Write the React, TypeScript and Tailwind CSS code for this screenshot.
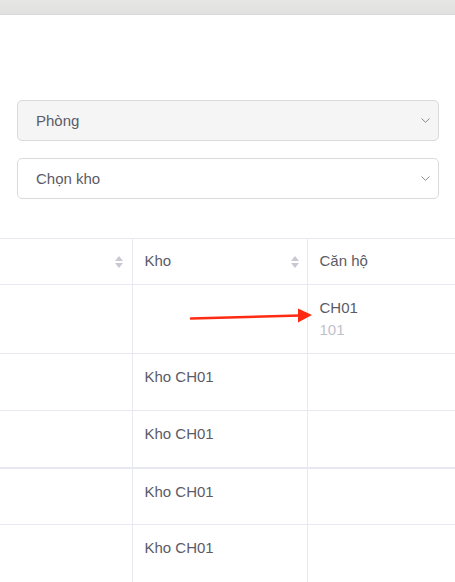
import React from 'react';

const Chevron: React.FC = () => (
  <svg className="w-[9px] h-[5px]" viewBox="0 0 9 5" fill="none" stroke="#8a8a90" strokeWidth={1}>
    <path d="M0.8 0.8l3.7 3.5 3.7-3.5" strokeLinecap="round" strokeLinejoin="round" />
  </svg>
);

const SortIcon: React.FC = () => (
  <svg className="w-[10px] h-[14px]" viewBox="0 0 10 14" fill="#c8c9d2">
    <path d="M5 1l4 5H1z" />
    <path d="M5 13l4-5H1z" />
  </svg>
);

const Select: React.FC<{ label: string; filled?: boolean }> = ({ label, filled }) => (
  <div className={`h-[41px] rounded-[5px] border border-[#d9d9de] flex items-center justify-between pl-[18px] pr-[8px] ${filled ? 'bg-[#f5f5f6]' : 'bg-white'}`}>
    <span className="text-[15px] text-[#5b5b66] pt-[2px]">{label}</span>
    <Chevron />
  </div>
);

const rows = ['Kho CH01', 'Kho CH01', 'Kho CH01', 'Kho CH01'];

const App: React.FC = () => {
  return (
    <div className="w-[455px] h-[582px] overflow-hidden bg-white relative" style={{ fontFamily: '"Liberation Sans", Arial, sans-serif' }}>
      <div className="h-[15px] bg-gradient-to-b from-[#e6e6e5] to-[#e1e1e0] border-b border-[#d9d9d9]" />

      <div className="pt-[85px] pl-[17px] pr-[16px] flex flex-col gap-[17px]">
        <Select label="Phòng" filled />
        <Select label="Chọn kho" />
      </div>

      <div className="mt-[39px] w-[600px]">
        <table className="border-collapse table-fixed w-full text-[15px] text-[#5b5b66]">
          <colgroup>
            <col className="w-[132px]" />
            <col className="w-[175px]" />
            <col />
          </colgroup>
          <thead>
            <tr className="h-[46px] border-t border-b border-[#e8e8f0]">
              <th className="border-r border-[#e8e8f0] font-normal text-left pr-[8px]">
                <div className="flex justify-end"><SortIcon /></div>
              </th>
              <th className="border-r border-[#e8e8f0] font-normal text-left pl-[12px] pr-[7px]">
                <div className="flex items-center justify-between"><span>Kho</span><SortIcon /></div>
              </th>
              <th className="font-normal text-left pl-[12px]">Căn hộ</th>
            </tr>
          </thead>
          <tbody>
            <tr className="h-[69px] border-b border-[#e8e8f0] align-top">
              <td className="border-r border-[#e8e8f0]" />
              <td className="border-r border-[#e8e8f0]" />
              <td className="pl-[12px] pt-[12px] leading-[22px]">
                <div>CH01</div>
                <div className="text-[#c0c1cb]">101</div>
              </td>
            </tr>
            {rows.map((r, i) => (
              <tr key={i} className={`h-[57px] align-top border-[#e8e8f0] ${i === 1 ? 'border-b-2' : i === 3 ? '' : 'border-b'}`}>
                <td className="border-r border-[#e8e8f0]" />
                <td className="border-r border-[#e8e8f0] pl-[12px] pt-[12px]">{r}</td>
                <td />
              </tr>
            ))}
          </tbody>
        </table>
      </div>

      <svg className="absolute left-[188px] top-[306px] w-[128px] h-[20px]" viewBox="0 0 128 20">
        <path d="M3 12.5L112 9.5" stroke="#ff2a12" strokeWidth={2.6} strokeLinecap="round" />
        <path d="M110 2.5L124 9L110 16.5z" fill="#ff2a12" />
      </svg>
    </div>
  );
};

export default App;
